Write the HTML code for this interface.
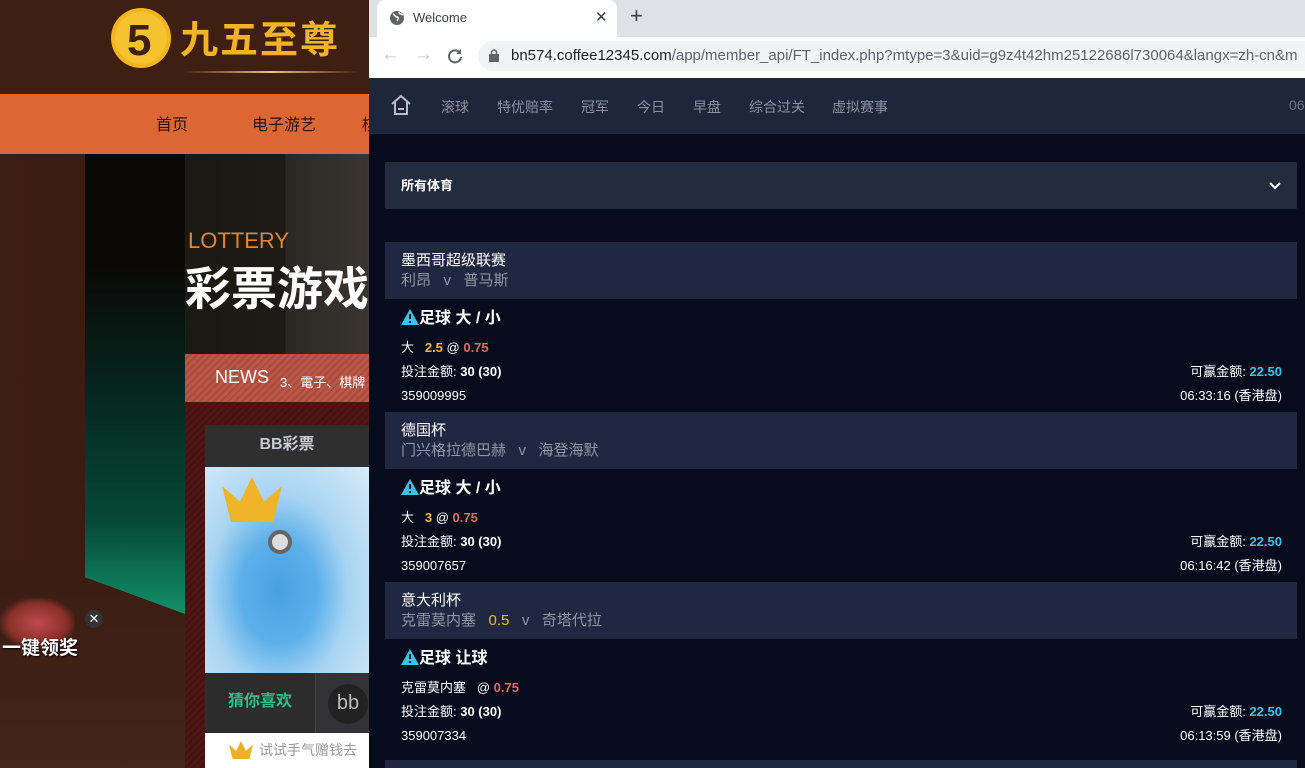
<!DOCTYPE html>
<html><head><meta charset="utf-8">
<style>
*{margin:0;padding:0;box-sizing:border-box}
body{width:1305px;height:768px;overflow:hidden;position:relative;font-family:"Liberation Sans","Noto Sans CJK SC",sans-serif;background:#3a1a10}
.abs{position:absolute}
#lh{left:0;top:0;width:369px;height:94px;background:#3f1f11}
#nav{left:0;top:94px;width:369px;height:60px;background:#dd6634;font-size:16px;color:#2a1208}
#nav span{position:absolute;top:17px}
#hero{left:0;top:154px;width:369px;height:614px;background:linear-gradient(90deg,#3e1d13 0,#3a1a12 185px,#1b1a10 186px,#1c1c14 285px,#2a2823 286px,#3a3530 369px)}
#floor{left:0;top:560px;width:185px;height:208px;background:linear-gradient(180deg,#3a1c12,#45241a)}
#green{left:85px;top:154px;width:100px;height:460px;background:linear-gradient(180deg,#0a0908 0,#0a0908 25%,#062a20 55%,#064a36 80%,#12906a 100%);clip-path:polygon(0 0,100% 0,100% 100%,0 92%)}
#news{left:185px;top:354px;width:184px;height:48px;background:repeating-linear-gradient(135deg,#b85848 0 3px,#a84a3c 3px 5px)}
#panel{left:185px;top:402px;width:184px;height:366px;background:repeating-linear-gradient(135deg,#4d1612 0 3px,#431210 3px 5px)}
#bbt{left:205px;top:425px;width:164px;height:42px;background:#2f2f30;color:#c8c8d0;font-size:16px;font-weight:bold;text-align:center;line-height:40px}
#img{left:205px;top:467px;width:164px;height:206px;background:radial-gradient(ellipse at 45% 60%,#4aa0e0 0,#5cb0ea 30%,#a8d4f2 55%,#d8ecf8 100%)}
#guess{left:205px;top:673px;width:110px;height:60px;background:#2c2c2d;color:#2fbf87;font-size:16px;font-weight:bold;text-align:center;line-height:58px}
#bbi{left:315px;top:673px;width:54px;height:60px;background:#333335;border-left:1px solid #444}
#try{left:205px;top:733px;width:164px;height:35px;background:#fff;color:#999;font-size:14px;line-height:34px;padding-left:54px}
#tabs{left:369px;top:0;width:936px;height:37px;background:#dee1e6}
#tab{left:377px;top:0;width:240px;height:37px;background:#fff;border-radius:8px 8px 0 0}
#tool{left:369px;top:37px;width:936px;height:41px;background:#fff}
#url{left:478px;top:41px;width:840px;height:30px;background:#f1f3f4;border-radius:15px;font-size:15px;color:#5f6368;line-height:30px;padding-left:33px;white-space:nowrap;overflow:hidden}
#url b{font-weight:normal;color:#202124}
#app{left:369px;top:78px;width:936px;height:690px;background:#070c1c}
#ah{left:369px;top:78px;width:936px;height:56px;background:#1e263b;font-size:14px;color:#8a90a0}
#ah span{position:absolute;top:19px}
#dd{left:385px;top:162px;width:912px;height:47px;background:#232b3e;border-radius:2px;color:#fff;font-size:13px;font-weight:bold;line-height:48px;padding-left:16px}
.lg{left:385px;width:912px;height:57px;background:#1f2840;padding:9px 0 0 16px}
.lg .t{color:#fff;font-size:15px;line-height:20px}
.lg .m{color:#8f96a6;font-size:15px;line-height:20px}
.bt{left:385px;width:912px;color:#fff;font-size:13px}
.bt .h{position:absolute;left:16px;top:10px;font-size:16px;font-weight:bold;line-height:20px}
.bt .r{position:absolute;left:16px;font-size:13px;line-height:16px}
.bt .rr{position:absolute;right:15px;font-size:13px;line-height:16px}
.y{color:#f0b83a;font-weight:bold}.rd{color:#e06a60;font-weight:bold}.c{color:#35c6e6;font-weight:bold}
</style></head><body>
<div id="lh" class="abs"></div>
<svg class="abs" style="left:108px;top:5px" width="66" height="66"><circle cx="33" cy="33" r="30" fill="#f2b51c"/><circle cx="33" cy="33" r="26" fill="#f6c230"/><text x="19" y="50" font-size="44" font-weight="bold" fill="#3f1f11" font-family="Liberation Sans">5</text></svg>
<div class="abs" style="left:180px;top:14px;font-size:38px;font-weight:bold;color:#f4b322;font-family:'Noto Sans CJK SC',sans-serif;letter-spacing:2px;line-height:46px">九五至尊</div>
<div class="abs" style="left:182px;top:71px;width:178px;height:2px;background:linear-gradient(90deg,transparent,#e9c27a,transparent)"></div>
<div id="nav" class="abs"><span style="left:156px">首页</span><span style="left:252px">电子游艺</span><span style="left:362px">棋</span></div>
<div id="hero" class="abs"></div>
<div id="floor" class="abs"></div>
<div id="green" class="abs"></div>
<div class="abs" style="left:188px;top:227px;color:#e5832f;font-size:22px;line-height:28px">LOTTERY</div>
<div class="abs" style="left:185px;top:258px;color:#fff;font-size:46px;font-weight:bold;line-height:56px;white-space:nowrap;font-family:'Noto Sans CJK SC',sans-serif">彩票游戏</div>
<div id="news" class="abs"><span style="position:absolute;left:30px;top:13px;color:#fff;font-size:18px">NEWS</span><span style="position:absolute;left:95px;top:18px;color:#fff;font-size:13px;white-space:nowrap">3、電子、棋牌</span></div>
<div id="panel" class="abs"></div>
<div id="bbt" class="abs">BB彩票</div>
<div id="img" class="abs"></div>
<div class="abs" style="left:222px;top:477px;width:60px;height:45px;background:#f0b428;clip-path:polygon(0 20%,30% 55%,50% 0,70% 55%,100% 20%,85% 100%,15% 100%)"></div>
<div class="abs" style="left:268px;top:530px;width:24px;height:24px;border-radius:50%;background:#ddd;border:4px solid #666"></div>
<div id="guess" class="abs">猜你喜欢</div>
<div id="bbi" class="abs"><div style="position:absolute;left:12px;top:11px;width:40px;height:40px;border-radius:50%;background:#222;color:#bbb;font-size:20px;text-align:center;line-height:38px">bb</div></div>
<div id="try" class="abs">试试手气赠钱去</div>
<div class="abs" style="left:229px;top:741px;width:24px;height:18px;background:#f0b020;clip-path:polygon(0 20%,30% 55%,50% 0,70% 55%,100% 20%,85% 100%,15% 100%)"></div>
<div class="abs" style="left:0;top:598px;width:75px;height:50px;background:radial-gradient(ellipse,#c04a50 0,#8a3028 55%,transparent 75%)"></div>
<div class="abs" style="left:2px;top:633px;color:#fff;font-size:19px;font-weight:bold;text-shadow:1px 1px 2px #000;font-family:'Noto Sans CJK SC',sans-serif">一键领奖</div>
<div class="abs" style="left:85px;top:610px;width:18px;height:18px;border-radius:50%;background:#333;color:#fff;font-size:13px;text-align:center;line-height:18px">✕</div>

<div id="tabs" class="abs"></div>
<div id="tab" class="abs"></div>
<svg class="abs" style="left:389px;top:10px" width="16" height="16" viewBox="0 0 16 16"><circle cx="8" cy="8" r="7" fill="#5f6368"/><path d="M4 4c2 1 2 3 4 3s1 3 0 4M10 2c0 2 2 2 4 3" stroke="#fff" stroke-width="1.5" fill="none"/></svg>
<div class="abs" style="left:413px;top:10px;font-size:13px;color:#3c4043">Welcome</div>
<div class="abs" style="left:595px;top:8px;font-size:15px;color:#3c4043">✕</div>
<div class="abs" style="left:630px;top:3px;font-size:22px;color:#3c4043">+</div>
<div id="tool" class="abs"></div>
<div class="abs" style="left:381px;top:44px;font-size:19px;color:#bdc1c6">←</div>
<div class="abs" style="left:414px;top:44px;font-size:19px;color:#bdc1c6">→</div>
<svg class="abs" style="left:446px;top:47px" width="18" height="18" viewBox="0 0 18 18"><path d="M14 6A6 6 0 1 0 15 10" stroke="#5f6368" stroke-width="2" fill="none"/><path d="M15 2v5h-5z" fill="#5f6368"/></svg>
<div id="url" class="abs"><b>bn574.coffee12345.com</b>/app/member_api/FT_index.php?mtype=3&amp;uid=g9z4t42hm25122686l730064&amp;langx=zh-cn&amp;m</div>
<svg class="abs" style="left:489px;top:49px" width="10" height="13" viewBox="0 0 10 13"><rect x="0" y="5" width="10" height="8" rx="1" fill="#5f6368"/><path d="M2.5 5V3.5a2.5 2.5 0 0 1 5 0V5" stroke="#5f6368" stroke-width="1.5" fill="none"/></svg>

<div id="app" class="abs"></div>
<div id="ah" class="abs">
<svg style="position:absolute;left:20px;top:15px" width="24" height="24" viewBox="0 0 24 24"><path d="M3 11L12 3l9 8M6 9v12h12V9" stroke="#b8bcc6" stroke-width="2" fill="none"/><path d="M9 16h6" stroke="#b8bcc6" stroke-width="2"/></svg>
<span style="left:72px">滚球</span><span style="left:128px">特优赔率</span><span style="left:212px">冠军</span><span style="left:268px">今日</span><span style="left:324px">早盘</span><span style="left:380px">综合过关</span><span style="left:463px">虚拟赛事</span><span style="left:920px;color:#6b7284">06</span></div>
<div id="dd" class="abs">所有体育<svg style="position:absolute;right:16px;top:19px" width="12" height="9" viewBox="0 0 12 9"><path d="M1 2l5 5 5-5" stroke="#fff" stroke-width="2" fill="none"/></svg></div>

<div class="abs lg" style="top:242px"><div class="t">墨西哥超级联赛</div><div class="m">利昂 &nbsp; v &nbsp; 普马斯</div></div>
<div class="abs bt" style="top:299px;height:113px">
<div class="h"><svg width="18" height="16" viewBox="0 0 18 16" style="vertical-align:-2px"><path d="M9 0L18 16H0z" fill="#35c6e6"/><path d="M9 5v5M9 12v2" stroke="#070c1c" stroke-width="2"/></svg>足球 大 / 小</div>
<div class="r" style="top:41px">大 &nbsp; <span class="y">2.5</span> @ <span class="rd">0.75</span></div>
<div class="r" style="top:65px">投注金额: <b>30 (30)</b></div>
<div class="rr" style="top:65px">可赢金额: <span class="c">22.50</span></div>
<div class="r" style="top:89px">359009995</div>
<div class="rr" style="top:89px">06:33:16 (香港盘)</div></div>

<div class="abs lg" style="top:412px"><div class="t">德国杯</div><div class="m">门兴格拉德巴赫 &nbsp; v &nbsp; 海登海默</div></div>
<div class="abs bt" style="top:469px;height:113px">
<div class="h"><svg width="18" height="16" viewBox="0 0 18 16" style="vertical-align:-2px"><path d="M9 0L18 16H0z" fill="#35c6e6"/><path d="M9 5v5M9 12v2" stroke="#070c1c" stroke-width="2"/></svg>足球 大 / 小</div>
<div class="r" style="top:41px">大 &nbsp; <span class="y">3</span> @ <span class="rd">0.75</span></div>
<div class="r" style="top:65px">投注金额: <b>30 (30)</b></div>
<div class="rr" style="top:65px">可赢金额: <span class="c">22.50</span></div>
<div class="r" style="top:89px">359007657</div>
<div class="rr" style="top:89px">06:16:42 (香港盘)</div></div>

<div class="abs lg" style="top:582px"><div class="t">意大利杯</div><div class="m">克雷莫内塞 &nbsp; <span style="color:#f0b83a">0.5</span> &nbsp; v &nbsp; 奇塔代拉</div></div>
<div class="abs bt" style="top:639px;height:113px">
<div class="h"><svg width="18" height="16" viewBox="0 0 18 16" style="vertical-align:-2px"><path d="M9 0L18 16H0z" fill="#35c6e6"/><path d="M9 5v5M9 12v2" stroke="#070c1c" stroke-width="2"/></svg>足球 让球</div>
<div class="r" style="top:41px">克雷莫内塞 &nbsp; @ <span class="rd">0.75</span></div>
<div class="r" style="top:65px">投注金额: <b>30 (30)</b></div>
<div class="rr" style="top:65px">可赢金额: <span class="c">22.50</span></div>
<div class="r" style="top:89px">359007334</div>
<div class="rr" style="top:89px">06:13:59 (香港盘)</div></div>
<div class="abs" style="left:385px;top:760px;width:912px;height:8px;background:#1f2840"></div>
</body></html>
